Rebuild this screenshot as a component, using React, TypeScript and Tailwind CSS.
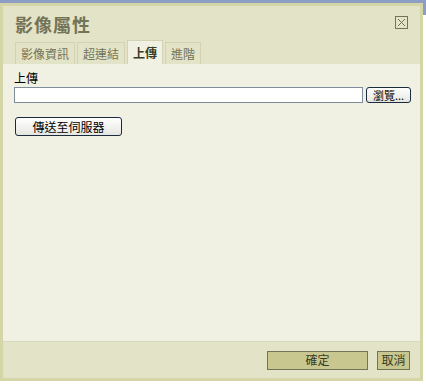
import { useState } from "react";

const tabs = ["影像資訊", "超連結", "上傳", "進階"];

export default function App() {
  const [active, setActive] = useState(2);

  return (
    <div
      className="relative w-[426px] h-[384px] bg-white overflow-hidden"
      style={{ fontFamily: '"Noto Sans CJK TC", "Liberation Sans", sans-serif' }}
    >
      {/* page behind the dialog */}
      <div className="h-[3px] bg-[#8d9dc4]" />
      <div className="absolute right-0 top-0 w-[3px] h-[15px] bg-[#8d9dc4]" />

      {/* Dialog */}
      <div className="w-[423px] h-[378px] border-[3px] border-[#d5d6a8] flex flex-col">
        {/* Title + tabs */}
        <div className="bg-[#e3e3c7] flex flex-col">
          <div className="flex items-start justify-between h-[34px] pl-[12px] pr-[12px]">
            <span className="text-[18px] font-bold text-[#737357] leading-none mt-[9px] tracking-[1px]">
              影像屬性
            </span>
            <button className="mt-[10px] w-[13px] h-[13px] border border-[#737357] flex items-center justify-center">
              <svg width="9" height="9" viewBox="0 0 9 9">
                <path d="M1 1 L8 8 M8 1 L1 8" stroke="#737357" strokeWidth="1" />
              </svg>
            </button>
          </div>
          <div className="flex items-end gap-[2px] pl-[12px] h-[24px]">
            {tabs.map((t, i) => (
              <button
                key={t}
                onClick={() => setActive(i)}
                className={
                  i === active
                    ? "h-[24px] px-[5px] bg-[#f1f1e3] border border-b-0 border-[#d3d3b3] text-[12px] font-bold text-[#3b3b1f] leading-none"
                    : "h-[22px] px-[5px] bg-[#e3e3c7] border border-b-0 border-[#d3d3b3] text-[12px] text-[#737357] leading-none"
                }
              >
                {t}
              </button>
            ))}
          </div>
        </div>

        {/* Content */}
        <div className="flex-1 bg-[#f1f1e3] pl-[11px] pr-[9px] pt-[7px]">
          <div className="text-[12px] leading-[14px] text-black">上傳</div>
          <div className="flex items-center gap-[3px] mt-[2px]">
            <div className="w-[350px] h-[16px] bg-white border border-[#7f8c9c]" />
            <button className="w-[45px] h-[16px] rounded-[3px] border border-[#1c2a40] bg-gradient-to-b from-white to-[#e6e6e0] text-[11px] leading-none text-black">
              瀏覽...
            </button>
          </div>
          <button className="mt-[14px] ml-[1px] w-[107px] h-[19px] rounded-[3px] border border-[#1c2a40] bg-gradient-to-b from-white to-[#e6e6e0] text-[12px] leading-none text-black">
            傳送至伺服器
          </button>
        </div>

        {/* Footer */}
        <div className="h-[37px] bg-[#e3e3c7] border-t border-[#d8d8bb] flex items-center justify-end gap-[9px] pr-[10px]">
          <button className="w-[101px] h-[19px] bg-[#c7c78f] border border-[#737357] text-[12px] leading-none text-[#3b3b1f]">
            確定
          </button>
          <button className="w-[33px] h-[19px] bg-[#c7c78f] border border-[#737357] text-[12px] leading-none text-[#3b3b1f]">
            取消
          </button>
        </div>
      </div>
    </div>
  );
}
